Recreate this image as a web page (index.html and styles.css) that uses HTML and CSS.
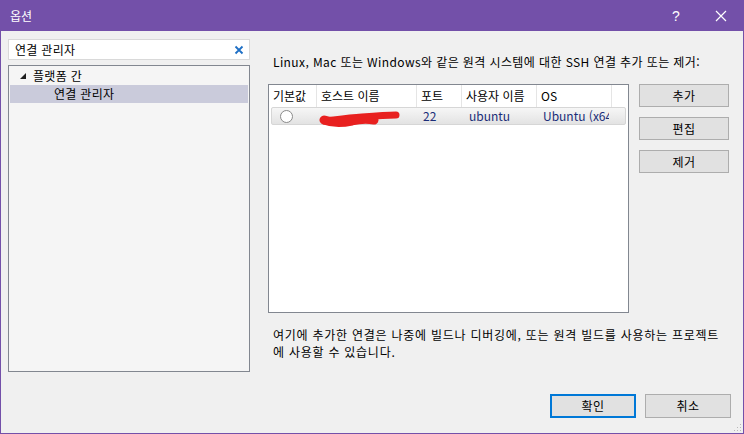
FILE: index.html
```html
<!DOCTYPE html>
<html lang="ko">
<head>
	<meta charset="UTF-8">
	<title>옵션</title>
<link rel="stylesheet" href="styles.css">
</head>
<body>
	<div class="window">
		<div class="titlebar">
			<span class="title">옵션</span>
			<span class="help">?</span>
			<svg class="close" width="12" height="12" viewBox="0 0 12 12"><path d="M1 1L11 11M11 1L1 11" stroke="#fff" stroke-width="1.2"/></svg>
		</div>
		<div class="main">
			<div class="left">
				<div class="search">
					<span>연결 관리자</span>
					<svg width="10" height="10" viewBox="0 0 10 10"><path d="M1.5 1.5L8.5 8.5M8.5 1.5L1.5 8.5" stroke="#1e6fc5" stroke-width="1.8"/></svg>
				</div>
				<div class="tree">
					<div class="node">
						<svg width="8" height="8" viewBox="0 0 8 8"><polygon points="7,1 7,7 1,7" fill="#1e1e1e"/></svg>
						<span>플랫폼 간</span>
					</div>
					<div class="node child selected">연결 관리자</div>
				</div>
			</div>
			<div class="right">
				<p class="desc">Linux, Mac 또는 Windows와 같은 원격 시스템에 대한 SSH 연결 추가 또는 제거:</p>
				<div class="listarea">
					<div class="list">
						<div class="head">
							<div class="c1">기본값</div>
							<div class="c2">호스트 이름</div>
							<div class="c3">포트</div>
							<div class="c4">사용자 이름</div>
							<div class="c5">OS</div>
						</div>
						<div class="row">
							<div class="c1"><span class="radio"></span></div>
							<div class="c2">
								<svg class="scribble" width="84" height="20" viewBox="0 0 84 20"><path d="M7 13C16 12 30 10 44 9C56 8 68 7 78 7" stroke="#e8201f" stroke-width="7" fill="none" stroke-linecap="round"/><path d="M6 12C14 15 24 15 34 13C42 11 50 11 56 12" stroke="#e8201f" stroke-width="9" fill="none" stroke-linecap="round"/></svg>
							</div>
							<div class="c3">22</div>
							<div class="c4">ubuntu</div>
							<div class="c5">Ubuntu (x64)</div>
						</div>
					</div>
					<div class="side">
						<button class="btn">추가</button>
						<button class="btn">편집</button>
						<button class="btn">제거</button>
					</div>
				</div>
				<p class="note">여기에 추가한 연결은 나중에 빌드나 디버깅에, 또는 원격 빌드를 사용하는 프로젝트<br>에 사용할 수 있습니다.</p>
				<div class="footer">
					<button class="btn ok">확인</button>
					<button class="btn cancel">취소</button>
				</div>
			</div>
			<div class="grip"></div>
		</div>
	</div>
</body>
</html>
```

FILE: styles.css
```css
body,div,p,span,button{padding: 0;margin: 0;}
body{
	width: 744px;
	height: 434px;
	overflow: hidden;
	font-family: "Noto Sans CJK KR", "Noto Sans", sans-serif;
	font-size: 12px;
	color: #000;
}
.window{
	width: 744px;
	height: 434px;
	display: flex;
	flex-direction: column;
	background: #f0f0f0;
}
.titlebar{
	height: 31px;
	background: #7350a9;
	color: #fff;
	display: flex;
	align-items: center;
	padding: 0 17px 0 10px;
}
.title{
	flex: 1;
	font-size: 12px;
	line-height: 16px;
}
.help{
	width: 12px;
	margin-right: 31px;
	font-family: "Liberation Sans", sans-serif;
	font-size: 14px;
	line-height: 16px;
}
.main{
	flex: 1;
	display: flex;
	position: relative;
	border: 1px solid #7350a9;
	border-top: none;
	padding: 8px 0 0 7px;
}
.left{
	width: 242px;
	display: flex;
	flex-direction: column;
	gap: 5px;
}
.search{
	height: 21px;
	box-sizing: border-box;
	border: 1px solid #d9d9d9;
	background: #fff;
	display: flex;
	align-items: center;
	justify-content: space-between;
	padding: 0 5px 0 6px;
	line-height: 16px;
	letter-spacing: 0.3px;
}
.tree{
	height: 307px;
	box-sizing: border-box;
	border: 1px solid #828790;
	background: #f5f5f5;
	padding: 1px;
}
.node{
	height: 18px;
	display: flex;
	align-items: center;
	gap: 6px;
	padding-left: 9px;
	line-height: 16px;
	letter-spacing: 0.3px;
}
.child{
	padding-left: 44px;
}
.selected{
	background: #cacbdb;
}
.right{
	width: 463px;
	margin-left: 18px;
	display: flex;
	flex-direction: column;
}
.desc{
	margin: 15px 0 14px 5px;
	line-height: 16px;
	white-space: nowrap;
	letter-spacing: 0.4px;
}
.listarea{
	display: flex;
	gap: 10px;
}
.list{
	width: 361px;
	height: 229px;
	box-sizing: border-box;
	border: 1px solid #828790;
	background: #fff;
	overflow: hidden;
}
.head{
	height: 22px;
	display: flex;
}
.head div{
	border-right: 1px solid #e5e5e5;
	padding-left: 4px;
	line-height: 22px;
	box-sizing: border-box;
}
.c1{width: 48px;}
.c2{width: 100px;}
.c3{width: 45px;}
.c4{width: 75px;}
.c5{width: 75px; white-space: nowrap; overflow: hidden;}
.row{
	height: 18px;
	margin: 0 2px;
	box-sizing: border-box;
	border: 1px solid #d6d6d6;
	border-radius: 2px;
	background: linear-gradient(#f6f6f6, #e3e3e3);
	display: flex;
	color: #1b2d78;
	line-height: 16px;
}
.row div{
	display: flex;
	align-items: center;
	box-sizing: border-box;
}
.row .c1{width: 46px; padding-left: 8px;}
.row .c2{padding-left: 0; overflow: visible;}
.row .c3{padding-left: 5px;}
.row .c4{padding-left: 6px;}
.row .c5{padding-left: 5px; width: 71px;}
.scribble{
	margin-top: 4px;
}
.radio{
	width: 11px;
	height: 11px;
	border: 1px solid #8a8a8a;
	border-radius: 50%;
	background: #fff;
}
.side{
	display: flex;
	flex-direction: column;
	gap: 10px;
}
.btn{
	width: 90px;
	height: 23px;
	border: 1px solid #adadad;
	background: #e1e1e1;
	font-family: "Noto Sans CJK KR", sans-serif;
	font-size: 12px;
	line-height: 16px;
	color: #000;
	letter-spacing: 0.4px;
}
.note{
	margin: 13px 0 0 5px;
	line-height: 17px;
	letter-spacing: 0.75px;
}
.footer{
	margin-top: auto;
	margin-bottom: 15px;
	display: flex;
	justify-content: flex-end;
	gap: 9px;
}
.footer .btn{
	width: 86px;
	height: 24px;
}
.ok{
	border: 2px solid #0078d7;
}
.grip{
	position: absolute;
	right: 2px;
	bottom: 2px;
	width: 8px;
	height: 8px;
	background: radial-gradient(circle, #b8b8b8 0.8px, transparent 1px) 0 0 / 3px 3px;
	clip-path: polygon(100% 0, 100% 100%, 0 100%);
}
```
